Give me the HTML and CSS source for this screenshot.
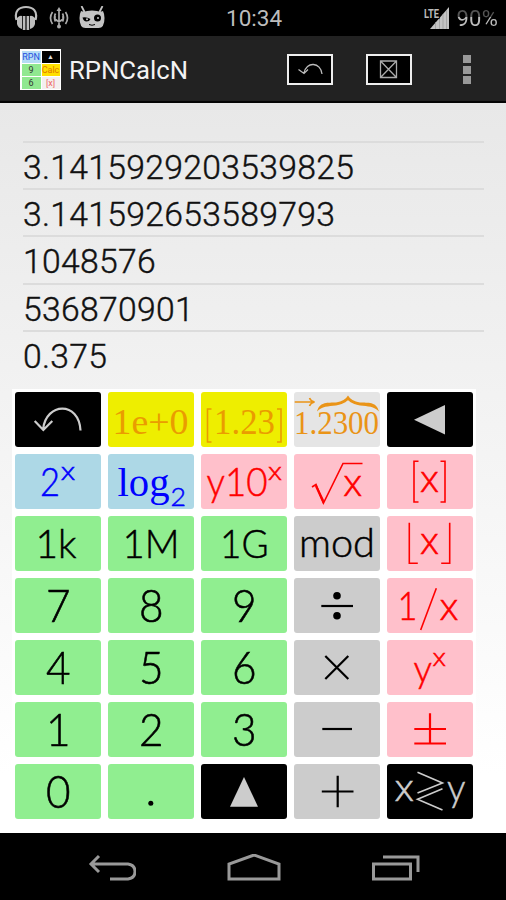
FILE: index.html
```html
<!DOCTYPE html>
<html lang="en">
<head>
  <meta charset="UTF-8">
  <title>RPNCalcN</title>
  <link rel="stylesheet" href="styles.css">
</head>
<body>

<div class="status-bar">
  <div class="notifications">
    <svg width="24" height="26" viewBox="0 0 24 26">
      <path d="M2.500 15C0 6 5 2 12 2s12 4 9.500 13" fill="none" stroke="#bdbdbd" stroke-width="2.200"/>
      <path d="M3 13q3-3 5-2v13q-4-1-5-5zM8.800 11h2.600v14H8.800zM12.600 11h2.600v14h-2.600zM21 13q-3-3-5-2v13q4-1 5-5z" fill="#bdbdbd"/>
    </svg>
    <svg class="usb" width="20" height="24" viewBox="0 0 20 24" fill="none" stroke="#aaa" stroke-width="1.700">
      <path d="M10 3v17M6 10v3l4 3 4-3v-3M3.500 6q-4 6 0 12M16.500 6q4 6 0 12M6.500 7.500q-2 4 0 8M13.500 7.500q2 4 0 8"/>
      <path d="M10 1l2.500 4h-5z" fill="#aaa" stroke="none"/>
      <circle cx="10" cy="20.500" r="2" fill="#aaa" stroke="none"/>
    </svg>
    <svg width="26" height="24" viewBox="0 0 26 24">
      <path d="M2.500 0l3.500 7M23.500 0L20 7" stroke="#c4c4c4" stroke-width="1.800"/>
      <path d="M2 5q3 1 6 0 5-1 10 0 3 1 6 0 1.500 3 1.500 7 0 10-6 10h-13q-6 0-6-10Q.500 8 2 5z" fill="#c4c4c4"/>
      <path d="M3.500 11.500q4-1 8 1.500-1 2.500-4 2.500t-4-4z"/>
      <circle cx="18.500" cy="12" r="3.500"/>
      <circle cx="8" cy="13.300" r="1" fill="#c4c4c4"/>
      <circle cx="19" cy="12" r="1" fill="#c4c4c4"/>
      <path d="M10 18.500q3 1.500 6 0" fill="none" stroke="#000"/>
    </svg>
  </div>
  <span class="clock">10:34</span>
  <div class="signal">
    <svg width="26" height="24" viewBox="0 0 26 24">
      <path d="M6 23L25 1v22z" fill="#c4c4c4"/>
      <path d="M11.500 16v7M15.500 12v11M19 8v15M22.500 4v19" stroke="#999" stroke-width=".7"/>
      <text class="lte" x="0" y="12" textLength="15" lengthAdjust="spacingAndGlyphs">LTE</text>
    </svg>
    <span class="battery">90%</span>
  </div>
</div>

<header class="action-bar">
  <div class="app-icon">
    <span class="mini blue">RPN</span><span class="mini black">▲</span>
    <span class="mini green">9</span><span class="mini gold">Calc</span>
    <span class="mini green">6</span><span class="mini white">[x]</span>
  </div>
  <h1>RPNCalcN</h1>
  <button class="action">
    <svg width="42" height="27" viewBox="0 0 42 27" fill="none" stroke="#bbb" stroke-width="1.300">
      <path d="M33 18C32 6 17 5 15 17M9.500 13.500L15 17.500 19 13.500"/>
    </svg>
  </button>
  <button class="action">
    <svg width="42" height="27" viewBox="0 0 42 27" fill="none" stroke="#aaa" stroke-width="1.300">
      <path d="M12.500 5h16v16.500h-16zM12.500 5l16 16.500M28.500 5l-16 16.500"/>
    </svg>
  </button>
  <div class="overflow"><i></i><i></i><i></i></div>
</header>

<main>
  <ul class="stack">
    <li></li>
    <li>3.1415929203539825</li>
    <li>3.141592653589793</li>
    <li>1048576</li>
    <li>536870901</li>
    <li>0.375</li>
  </ul>

  <div class="keypad">
    <button class="key black"><svg class="face line"><path d="M65.500 38.500C64 9 31 10 28 37.500M19.700 29L28.300 38 37.300 29"/></svg></button>
    <button class="key yellow"><svg class="face"><text class="serif" x="4.500" y="42.300" font-size="36" textLength="76" lengthAdjust="spacingAndGlyphs">1e+0</text></svg></button>
    <button class="key yellow"><svg class="face"><text class="serif" x="13" y="42.300" font-size="36" textLength="61" lengthAdjust="spacingAndGlyphs">1.23</text><path class="thin" d="M10.500 17H6.500V50h4M76 17h4V50h-4"/></svg></button>
    <button class="key silver"><svg class="face"><text class="serif" x="0" y="42" font-size="33" textLength="85" lengthAdjust="spacingAndGlyphs">1.2300</text><path class="thin" d="M.700 10h19.500M15.500 6q1 3 5 4-4 1-5 4"/><path class="brace" d="M23 19.500C26 9 34 11 42 10.500Q51 9 54 3.500 57 9 66 10.500C74 11 82 9 85 19.500 80 14 74 14.500 66 13.500 57 12 54 8 54 8 54 8 51 12 42 13.500 34 14.500 28 14 23 19.500z"/></svg></button>
    <button class="key black"><svg class="face"><path d="M27 27.700L58 13v29.500z" fill="currentColor"/></svg></button>

    <button class="key blue"><svg class="face"><text x="25" y="41.700" font-size="39" textLength="20" lengthAdjust="spacingAndGlyphs">2</text><text class="sans" x="45.700" y="26.300" font-size="23.500" textLength="14.500" lengthAdjust="spacingAndGlyphs">x</text></svg></button>
    <button class="key blue"><svg class="face"><text class="serif" x="9.500" y="41.500" font-size="41" textLength="52" lengthAdjust="spacingAndGlyphs">log</text><text x="62.500" y="52.300" font-size="26" textLength="15.500" lengthAdjust="spacingAndGlyphs">2</text></svg></button>
    <button class="key pink"><svg class="face"><text x="5.500" y="41.500" font-size="39" textLength="61" lengthAdjust="spacingAndGlyphs">y10</text><text class="sans" x="67" y="26.300" font-size="23.500" textLength="14" lengthAdjust="spacingAndGlyphs">x</text></svg></button>
    <button class="key pink"><svg class="face"><path class="thin" d="M18 33l4-2.500L29.500 49 49 9.500h19.500"/><path class="brace" d="M21 32.500l1.500-2L30 46l-1 4z"/><text class="sans" x="49.300" y="41.700" font-size="36" textLength="19" lengthAdjust="spacingAndGlyphs">x</text></svg></button>
    <button class="key pink"><svg class="face"><path class="thin" d="M31.500 7.300H27V48h4.500M53.500 7.300H58V48h-4.500"/><text class="sans" x="33" y="38.300" font-size="36" textLength="19" lengthAdjust="spacingAndGlyphs">x</text></svg></button>

    <button class="key green"><svg class="face"><text x="20.500" y="41.700" font-size="38.500" textLength="41" lengthAdjust="spacingAndGlyphs">1k</text></svg></button>
    <button class="key green"><svg class="face"><text x="14.500" y="41.700" font-size="39" textLength="57" lengthAdjust="spacingAndGlyphs">1M</text></svg></button>
    <button class="key green"><svg class="face"><text x="19" y="41.700" font-size="39" textLength="48.500" lengthAdjust="spacingAndGlyphs">1G</text></svg></button>
    <button class="key gray"><svg class="face"><text x="5" y="41.300" font-size="38.500" textLength="76" lengthAdjust="spacingAndGlyphs">mod</text></svg></button>
    <button class="key pink"><svg class="face"><path class="thin" d="M22.300 6.700v40.500h8.500M62.700 6.700v40.500h-8.500"/><text class="sans" x="33" y="37.700" font-size="36" textLength="19" lengthAdjust="spacingAndGlyphs">x</text></svg></button>

    <button class="key green digit"><span>7</span></button>
    <button class="key green digit"><span>8</span></button>
    <button class="key green digit"><span>9</span></button>
    <button class="key gray"><svg class="face line"><path d="M27.300 28H59"/><circle class="dot" cx="43" cy="17.700" r="3.800"/><circle class="dot" cx="43" cy="37.800" r="3.800"/></svg></button>
    <button class="key pink"><svg class="face"><text x="10.500" y="41.500" font-size="39" textLength="20" lengthAdjust="spacingAndGlyphs">1</text><path class="thin" d="M49.300 10.300L33.700 52"/><text class="sans" x="52.500" y="41.500" font-size="36" textLength="19" lengthAdjust="spacingAndGlyphs">x</text></svg></button>

    <button class="key green digit"><span>4</span></button>
    <button class="key green digit"><span>5</span></button>
    <button class="key green digit"><span>6</span></button>
    <button class="key gray"><svg class="face line"><path d="M31.300 16L54.300 39M54.300 16L31.300 39"/></svg></button>
    <button class="key pink"><svg class="face"><text x="26.500" y="42" font-size="38" textLength="18.500" lengthAdjust="spacingAndGlyphs">y</text><text class="sans" x="45.500" y="26" font-size="23.500" textLength="13.500" lengthAdjust="spacingAndGlyphs">x</text></svg></button>

    <button class="key green digit"><span>1</span></button>
    <button class="key green digit"><span>2</span></button>
    <button class="key green digit"><span>3</span></button>
    <button class="key gray"><svg class="face line"><path d="M28.300 27H58"/></svg></button>
    <button class="key pink"><svg class="face line"><path d="M27.300 27H59M43 11.300v30M27.300 41.500H59"/></svg></button>

    <button class="key green digit"><span>0</span></button>
    <button class="key green"><svg class="face"><circle class="dot" cx="42.800" cy="39.300" r="2.500"/></svg></button>
    <button class="key black"><svg class="face"><path d="M43 13l14 29.700H29z" fill="currentColor"/></svg></button>
    <button class="key gray"><svg class="face line"><path d="M27.800 27.500H59.500M43.700 11.700v31.600"/></svg></button>
    <button class="key black"><svg class="face"><text class="sans" x="7.500" y="36.700" font-size="36" textLength="19.500" lengthAdjust="spacingAndGlyphs">x</text><path class="thin" d="M30.500 8.300L55.500 19 30.500 29M55.500 24.700L30.500 35.300 55.500 46"/><text x="60" y="36.700" font-size="38" textLength="18.500" lengthAdjust="spacingAndGlyphs">y</text></svg></button>
  </div>
</main>

<nav class="nav-bar">
  <svg width="48" height="28" viewBox="0 0 48 28"><path d="M11 2L3 10l8 8M3 10h37q7 1 7 7.500T40 25H22"/></svg>
  <svg width="54" height="28" viewBox="0 0 54 28"><path d="M2 25V10L27 1l25 9v15z"/></svg>
  <svg width="50" height="28" viewBox="0 0 50 28"><path d="M2.500 10h37v15h-37zM12 3h35v15"/></svg>
</nav>

</body>
</html>
```

FILE: styles.css
```css
* {
  box-sizing: border-box;
}
body {
  margin: 0;
  width: 506px;
  height: 900px;
  display: flex;
  flex-direction: column;
  overflow: hidden;
  background: #000;
  font-family: Roboto, sans-serif;
}
svg {
  display: block;
  flex: none;
}
button {
  border: 0;
  margin: 0;
  padding: 0;
}

/* status bar */
.status-bar {
  height: 36px;
  display: grid;
  grid-template-columns: 1fr 56px 1fr;
  align-items: center;
  color: #bdbdbd;
  font-size: 22.500px;
}
.notifications {
  display: flex;
  align-items: center;
  gap: 10px;
  padding-left: 14px;
}
.usb {
  margin-left: 1px;
}
.clock {
  text-align: center;
  padding-left: 1px;
}
.signal {
  display: flex;
  align-items: center;
  justify-content: flex-end;
  gap: 7px;
  padding-right: 8px;
}
.lte {
  font-size: 13px;
  font-weight: bold;
  fill: #bbb;
  stroke: #000;
  stroke-width: 2px;
  paint-order: stroke;
}
.battery {
  padding-top: 1px;
  font-size: 22px;
  letter-spacing: 0.200px;
  background: linear-gradient(#555 48%, #bdbdbd 48%);
  -webkit-background-clip: text;
  background-clip: text;
  color: transparent;
}

/* action bar */
.action-bar {
  height: 67px;
  display: flex;
  align-items: center;
  background: #222;
  border-bottom: 2px solid #050505;
  padding: 2px 35px 0 20px;
}
.app-icon {
  width: 41px;
  height: 41px;
  display: grid;
  grid-template-columns: 19px 18px;
  grid-template-rows: repeat(3, 12px);
  gap: 1px;
  padding: 1.500px;
  background: #fff;
  overflow: hidden;
}
.mini {
  font-size: 9px;
  line-height: 12px;
  text-align: center;
  color: #333;
}
.mini.blue {
  background: #b5dcf5;
  color: #2450e0;
}
.mini.black {
  background: #000;
  color: #ddd;
  font-size: 7px;
}
.mini.green {
  background: #90e890;
}
.mini.gold {
  background: #ffe000;
  color: #e07800;
}
.mini.white {
  background: #f4f0f0;
  color: #e66;
}
h1 {
  flex: 1;
  margin: 1px 0 0 8px;
  color: #f3f3f3;
  font-size: 25.700px;
  font-weight: 400;
}
.action {
  width: 46px;
  height: 31px;
  margin-right: 33px;
  background: #000;
  border: 2px solid #eee;
}
.overflow {
  display: flex;
  flex-direction: column;
  gap: 2.500px;
  margin-left: 18px;
}
.overflow i {
  width: 8px;
  height: 8px;
  background: #999;
}

/* stack display */
main {
  height: 730px;
  background: linear-gradient(#e8e8e8, #fff 92%);
}
.stack {
  list-style: none;
  margin: 0 22px 0 23px;
  padding: 0;
  color: #111;
  font-size: 33.700px;
  font-weight: 300;
  letter-spacing: 0.300px;
  -webkit-text-stroke: 0.400px #111;
}
.stack li {
  height: 47.200px;
  line-height: 49px;
  border-bottom: 2px solid #dcdcdc;
}
.stack li:first-child {
  height: 40px;
}
.stack li:last-child {
  border-bottom: 0;
}

/* keypad */
.keypad {
  width: 464px;
  margin: 10px 0 0 12px;
  padding: 3.500px 3.500px 13px 3px;
  display: grid;
  grid-template-columns: repeat(5, 86px);
  grid-auto-rows: 55px;
  gap: 7px;
  background: #fff;
}
.key {
  display: flex;
  align-items: center;
  justify-content: center;
  border-radius: 3px;
  color: #000;
}
.key.black {
  background: #000;
  color: #ccc;
}
.key.yellow {
  background: #eeee00;
  color: #ea9c00;
}
.key.silver {
  background: #e5e5e5;
  color: #ea9417;
}
.key.blue {
  background: #add8e6;
  color: #0000ff;
}
.key.pink {
  background: #ffc0cb;
  color: #ff0000;
}
.key.green {
  background: #90ee90;
}
.key.gray {
  background: #cccccc;
}
.digit {
  font-family: Lato, sans-serif;
  font-size: 46px;
  line-height: 53px;
  font-weight: 300;
  padding-bottom: 2px;
  -webkit-text-stroke: 0.600px #000;
}
.digit span {
  transform: scaleX(0.92);
}
.face {
  width: 86px;
  height: 55px;
  overflow: visible;
}
.face text {
  font-family: Lato, sans-serif;
  font-weight: 300;
  fill: currentColor;
  stroke: currentColor;
  stroke-width: 0.500px;
}
.face text.sans {
  font-family: "Open Sans", sans-serif;
}
.face text.serif {
  font-family: "Liberation Serif", serif;
  font-weight: 400;
  stroke: none;
}
.line path {
  fill: none;
  stroke: currentColor;
  stroke-width: 2.200;
}
.thin {
  fill: none;
  stroke: currentColor;
  stroke-width: 1.600;
}
.brace {
  fill: currentColor;
}
.dot {
  fill: currentColor;
}

/* navigation bar */
.nav-bar {
  height: 67px;
  display: flex;
  align-items: center;
  justify-content: space-between;
  padding: 3px 85px 0 88px;
}
.nav-bar path {
  fill: none;
  stroke: #999;
  stroke-width: 3;
}
```
